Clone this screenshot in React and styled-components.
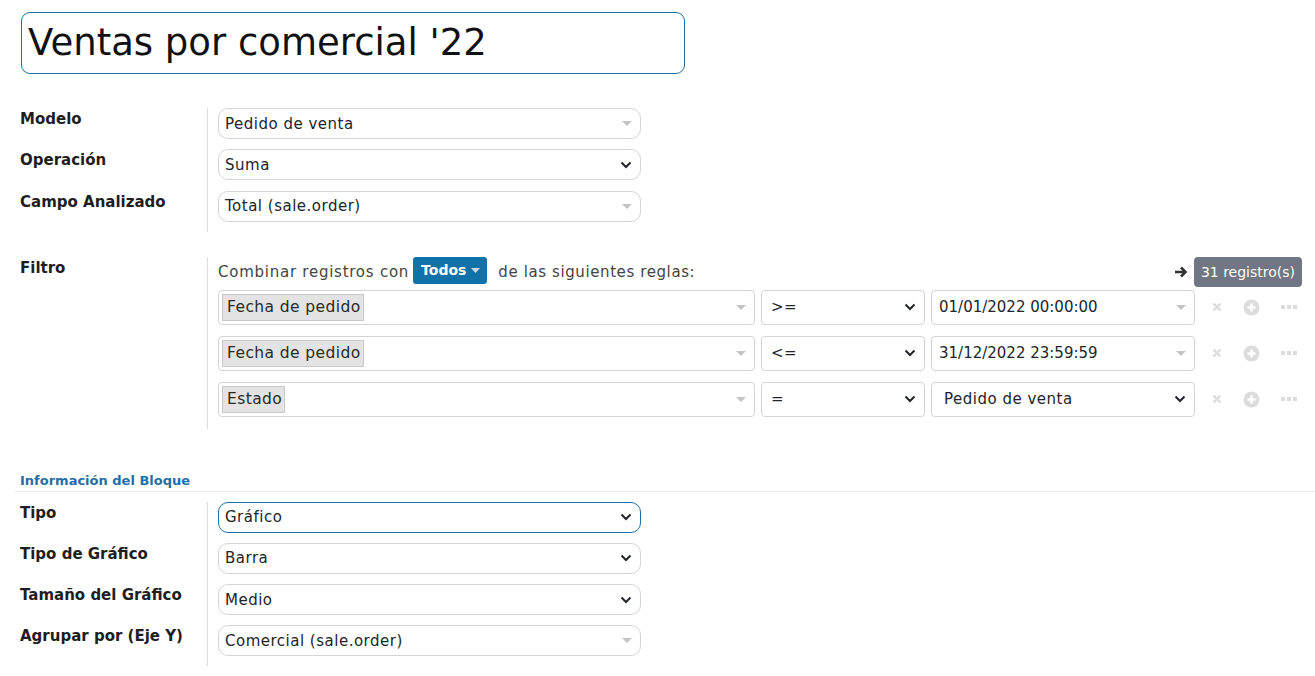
import React from "react";
import styled, { createGlobalStyle } from "styled-components";

const GlobalStyle = createGlobalStyle`
  body {
    margin: 0;
    background: #fff;
    font-family: "DejaVu Sans", "Noto Sans", sans-serif;
    color: #212529;
  }
`;

const mainFields = [
  { label: "Modelo", value: "Pedido de venta", kind: "many2one" },
  { label: "Operación", value: "Suma", kind: "select" },
  { label: "Campo Analizado", value: "Total (sale.order)", kind: "many2one" },
];

const blockFields = [
  { label: "Tipo", value: "Gráfico", kind: "select", focused: true },
  { label: "Tipo de Gráfico", value: "Barra", kind: "select" },
  { label: "Tamaño del Gráfico", value: "Medio", kind: "select" },
  { label: "Agrupar por (Eje Y)", value: "Comercial (sale.order)", kind: "many2one" },
];

const rules = [
  { field: "Fecha de pedido", op: ">=", value: "01/01/2022 00:00:00", valueKind: "many2one", tight: true },
  { field: "Fecha de pedido", op: "<=", value: "31/12/2022 23:59:59", valueKind: "many2one", tight: true },
  { field: "Estado", op: "=", value: "Pedido de venta", valueKind: "select" },
];

const Chevron = () => (
  <svg width="12" height="8" viewBox="0 0 12 8">
    <path d="M1.5 1.5 L6 6 L10.5 1.5" fill="none" stroke="#212529" strokeWidth="2" />
  </svg>
);

const Caret = () => (
  <svg width="10" height="5" viewBox="0 0 10 5">
    <path d="M0 0 L10 0 L5 5 Z" fill="#c4c4c4" />
  </svg>
);

const Field = ({ value, kind, focused, rule, tag, indent = 0, tight }) => (
  <Input $rule={rule} $focused={focused}>
    {tag ? (
      <Tag>{value}</Tag>
    ) : (
      <InputText $indent={indent} $tight={tight}>
        {value}
      </InputText>
    )}
    {kind === "select" ? <Chevron /> : <Caret />}
  </Input>
);

const App = () => {
  return (
    <Page>
      <GlobalStyle />
      <TitleBox>Ventas por comercial '22</TitleBox>

      <Group $top={34}>
        <Labels>
          {mainFields.map((f) => (
            <Label key={f.label}>{f.label}</Label>
          ))}
        </Labels>
        <Fields>
          {mainFields.map((f) => (
            <Field key={f.label} value={f.value} kind={f.kind} />
          ))}
        </Fields>
      </Group>

      <Group $top={25}>
        <Labels>
          <Label>Filtro</Label>
        </Labels>
        <FilterBody>
          <FilterHeader>
            <span>Combinar registros con</span>
            <TodosButton>
              Todos
              <svg width="9" height="5" viewBox="0 0 9 5">
                <path d="M0 0 L9 0 L4.5 5 Z" fill="#c9d9e4" />
              </svg>
            </TodosButton>
            <span>de las siguientes reglas:</span>
            <Count>
              <svg width="13" height="12" viewBox="0 0 13 12">
                <path d="M0 6 H10 M6 1.5 L10.5 6 L6 10.5" fill="none" stroke="#333" strokeWidth="2.6" />
              </svg>
              <Badge>31 registro(s)</Badge>
            </Count>
          </FilterHeader>
          {rules.map((r, i) => (
            <RuleRow key={i}>
              <Field rule tag value={r.field} kind="many2one" />
              <Field rule value={r.op} kind="select" indent={6} />
              <Field
                rule
                value={r.value}
                kind={r.valueKind}
                indent={r.valueKind === "select" ? 9 : 4}
                tight={r.tight}
              />
              <RuleActions>
                <svg width="10" height="10" viewBox="0 0 10 10">
                  <path d="M1.5 1.5 L8.5 8.5 M8.5 1.5 L1.5 8.5" stroke="#dcdcdc" strokeWidth="2.4" />
                </svg>
                <svg width="17" height="17" viewBox="0 0 17 17">
                  <circle cx="8.5" cy="8.5" r="8" fill="#dcdcdc" />
                  <path d="M8.5 4.5 V12.5 M4.5 8.5 H12.5" stroke="#fff" strokeWidth="2.6" />
                </svg>
                <svg width="16" height="4" viewBox="0 0 16 4">
                  <rect x="0" y="0" width="4" height="4" fill="#dcdcdc" />
                  <rect x="6" y="0" width="4" height="4" fill="#dcdcdc" />
                  <rect x="12" y="0" width="4" height="4" fill="#dcdcdc" />
                </svg>
              </RuleActions>
            </RuleRow>
          ))}
        </FilterBody>
      </Group>

      <SectionTitle>Información del Bloque</SectionTitle>

      <Group $top={10}>
        <Labels>
          {blockFields.map((f) => (
            <Label key={f.label}>{f.label}</Label>
          ))}
        </Labels>
        <Fields>
          {blockFields.map((f) => (
            <Field key={f.label} value={f.value} kind={f.kind} focused={f.focused} />
          ))}
        </Fields>
      </Group>
    </Page>
  );
};

export default App;

const Page = styled.div`
  padding: 12px 0 0 20px;
  width: 1315px;
  box-sizing: border-box;
`;

const TitleBox = styled.div`
  margin-left: 1px;
  width: 664px;
  height: 62px;
  box-sizing: border-box;
  border: 1px solid #1a72a6;
  border-radius: 9px;
  padding: 0 0 0 6px;
  font-size: 37px;
  line-height: 60px;
  color: #111;
`;

const Group = styled.div`
  display: grid;
  grid-template-columns: 187px 1fr;
  margin-top: ${(p) => p.$top}px;
`;

const Labels = styled.div`
  display: flex;
  flex-direction: column;
  gap: 10.3px;
`;

const Label = styled.div`
  height: 31px;
  font-size: 15px;
  font-weight: 700;
  line-height: 22px;
  color: #1e1e1e;
`;

const Fields = styled.div`
  border-left: 1px solid #dcdcdc;
  padding: 0 0 10px 10px;
  display: flex;
  flex-direction: column;
  gap: 10.3px;
`;

const Input = styled.div`
  box-sizing: border-box;
  width: ${(p) => (p.$rule ? "100%" : "423px")};
  height: ${(p) => (p.$rule ? "35px" : "31px")};
  border: 1px solid ${(p) => (p.$focused ? "#1a72a6" : "#d4d4d4")};
  border-radius: ${(p) => (p.$rule ? "4px" : "10px")};
  display: flex;
  align-items: center;
  justify-content: space-between;
  padding: ${(p) => (p.$rule ? "0 8px 0 3px" : "0 8px 0 6px")};
  background: #fff;
`;

const InputText = styled.span`
  font-size: 15px;
  letter-spacing: ${(p) => (p.$tight ? "0" : "0.5px")};
  color: #212529;
  padding-left: ${(p) => p.$indent}px;
  white-space: nowrap;
`;

const Tag = styled.span`
  background: #e3e3e3;
  border: 1px solid #c9c9c9;
  font-size: 15.5px;
  letter-spacing: 0.4px;
  line-height: 25px;
  padding: 0 2px 0 4px;
  color: #2a2a2a;
`;

const FilterBody = styled.div`
  border-left: 1px solid #dcdcdc;
  padding: 0 0 12px 10px;
  display: flex;
  flex-direction: column;
  gap: 11px;
`;

const FilterHeader = styled.div`
  display: flex;
  align-items: center;
  height: 30px;
  margin-bottom: -8px;
  font-size: 15px;
  letter-spacing: 0.75px;
  color: #444;

  & > span:last-of-type {
    margin-left: 11px;
    letter-spacing: 0.6px;
  }
`;

const TodosButton = styled.div`
  display: flex;
  align-items: center;
  gap: 5px;
  margin-left: 4px;
  height: 27px;
  margin-top: -3px;
  padding: 0 7px 0 8px;
  background: #1072a8;
  color: #fff;
  font-size: 14px;
  letter-spacing: 0;
  font-weight: 600;
  border-radius: 3px;
`;

const Count = styled.div`
  margin-left: auto;
  margin-right: 13px;
  display: flex;
  align-items: center;
  gap: 6px;
`;

const Badge = styled.div`
  height: 30px;
  line-height: 30px;
  padding: 0 7px;
  background: #717684;
  color: #fff;
  font-size: 14px;
  letter-spacing: 0;
  border-radius: 4px;
`;

const RuleRow = styled.div`
  display: grid;
  grid-template-columns: 537px 164px 264px 1fr;
  column-gap: 6px;
  align-items: center;
`;

const RuleActions = styled.div`
  display: flex;
  align-items: center;
  padding-left: 11px;
  gap: 21px;
`;

const SectionTitle = styled.div`
  margin-top: 43px;
  margin-left: -5px;
  padding: 0 0 1px 5px;
  border-bottom: 1px solid #eeeeee;
  font-size: 13px;
  font-weight: 600;
  color: #1f6fa5;
  line-height: 18px;
`;
